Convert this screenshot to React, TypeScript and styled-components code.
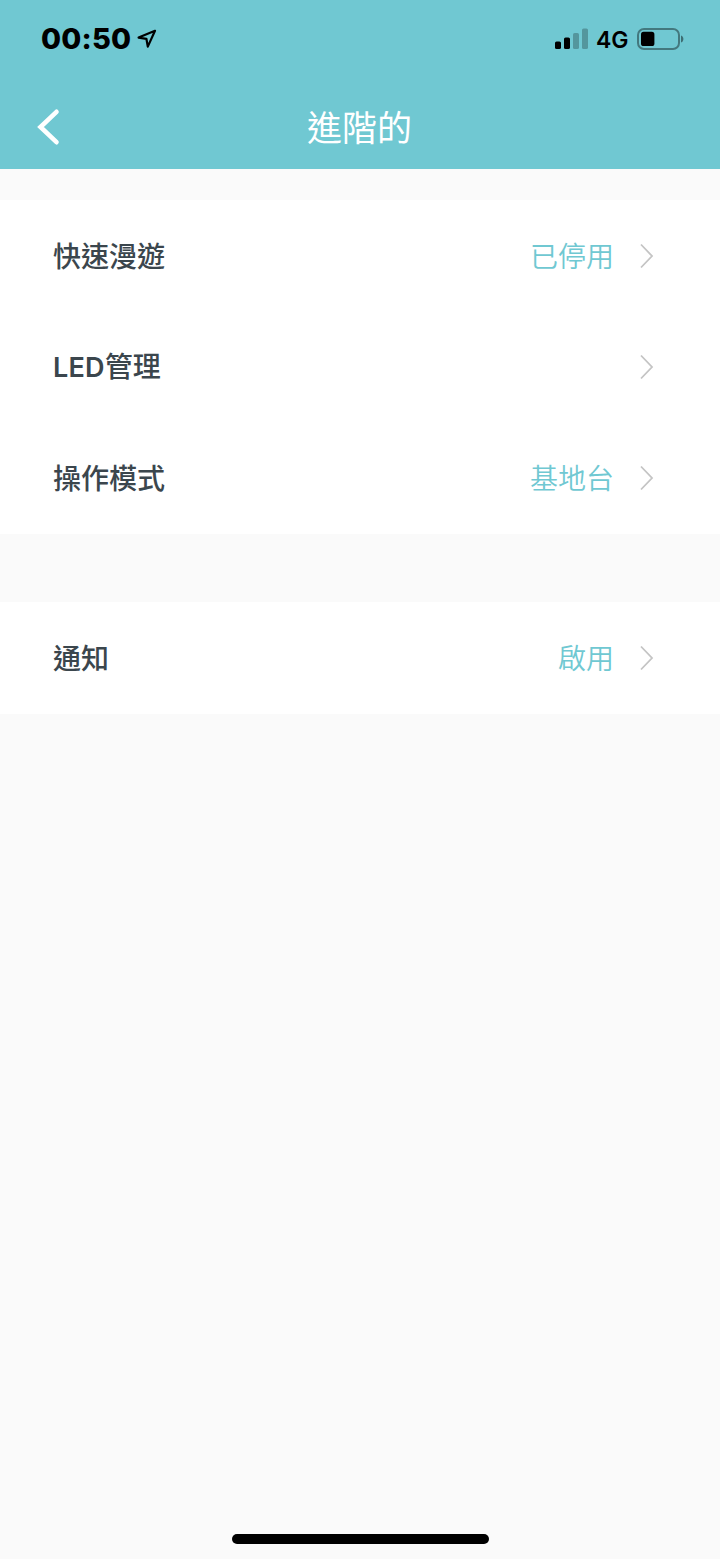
import styled, { createGlobalStyle } from 'styled-components'

const GlobalStyle = createGlobalStyle`
  * {
    box-sizing: border-box;
  }

  body {
    margin: 0;
    background-color: #fafafa;
    font-family: "Noto Sans CJK TC", sans-serif;
  }
`

const Screen = styled.div`
  display: flex;
  flex-direction: column;
  width: 100%;
  height: 1559px;
  background-color: #fafafa;
`

const Header = styled.header`
  height: 169px;
  background-color: #70c8d2;
`

const StatusBar = styled.div`
  display: flex;
  align-items: center;
  justify-content: space-between;
  height: 86px;
  padding: 0 36px 8px 41px;
  color: #000;
  font-family: Inter, sans-serif;
`

const StatusGroup = styled.div`
  display: flex;
  align-items: center;
`

const Time = styled.span`
  width: 89px;
  margin-right: 7px;
  font-size: 29px;
  font-weight: 800;
  letter-spacing: 0.2px;
  line-height: 34px;
  white-space: nowrap;
`

const Network = styled.span`
  width: 33px;
  margin: 1px 8px 0 8px;
  font-size: 23px;
  font-weight: 600;
  line-height: 28px;
  white-space: nowrap;
`

const NavBar = styled.div`
  display: grid;
  grid-template-columns: 100px 1fr 100px;
  align-items: center;
  height: 83px;
`

const BackButton = styled.button`
  display: flex;
  align-items: center;
  height: 83px;
  padding: 0 0 2px 36px;
  border: none;
  background: none;
`

const Title = styled.h1`
  margin: 0 1px 4px 0;
  color: #fff;
  font-size: 35px;
  font-weight: 400;
  line-height: 50px;
  text-align: center;
`

const Section = styled.section<{ $top: number }>`
  display: flex;
  flex-direction: column;
  margin-top: ${({ $top }) => $top}px;
  background-color: #fff;
`

const Row = styled.div`
  display: flex;
  align-items: center;
  height: 111.4px;
  padding: 0 66px 0 53px;
`

const Label = styled.span`
  flex: 1;
  margin-bottom: 2.1px;
  color: #3b464d;
  font-size: 28px;
  font-weight: 500;
  line-height: 40px;
`

const Latin = styled.span`
  font-family: Inter, sans-serif;
  font-size: 27px;
  font-weight: 600;
  letter-spacing: 0.2px;
`

const Value = styled.span`
  margin: 0 26px 2.1px 0;
  color: #70c8d2;
  font-size: 28px;
  font-weight: 350;
  line-height: 40px;
`

const HomeIndicator = styled.div`
  width: 257px;
  height: 10px;
  margin: auto 231px 15px 232px;
  border-radius: 5px;
  background-color: #000;
`

const LocationIcon = () => (
  <svg width="20" height="20" viewBox="0 0 20 20" fill="none">
    <path d="M18 1.8L1.6 8.6L9.4 9.8L10.8 17.6Z" stroke="#000" strokeWidth="2.2" strokeLinejoin="round" />
  </svg>
)

const SignalIcon = () => (
  <svg width="33" height="22" viewBox="0 0 33 22">
    <rect x="0" y="13.5" width="6" height="7.5" rx="1.6" />
    <rect x="9" y="9.5" width="6" height="11.5" rx="1.6" />
    <rect x="18" y="5" width="6" height="16" rx="1.6" opacity="0.25" />
    <rect x="27" y="0.5" width="6" height="20.5" rx="1.6" opacity="0.25" />
  </svg>
)

const BatteryIcon = () => (
  <svg width="47" height="22" viewBox="0 0 47 22">
    <rect x="1" y="1" width="41" height="20" rx="6" fill="none" stroke="#000" strokeOpacity="0.4" strokeWidth="2" />
    <rect x="4" y="3.8" width="13.4" height="14.2" rx="2.6" />
    <path d="M44 7.4C47.2 8.6 47.2 13.4 44 14.6Z" opacity="0.45" />
  </svg>
)

const BackIcon = () => (
  <svg width="24" height="38" viewBox="0 0 24 38" fill="none">
    <path d="M20.5 3.8L4.5 19L20.5 34.2" stroke="#fff" strokeWidth="4.6" strokeLinecap="round" />
  </svg>
)

const ChevronIcon = () => (
  <svg width="14" height="26" viewBox="0 0 14 26" fill="none">
    <path d="M1 1.5L12 13L1 24.5" stroke="#c4c4c4" strokeWidth="1.8" />
  </svg>
)

type ItemProps = {
  label: string
  latin?: string
  value?: string
}

const Item = ({ label, latin, value }: ItemProps) => (
  <Row>
    <Label>
      {latin && <Latin>{latin}</Latin>}
      {label}
    </Label>
    {value && <Value>{value}</Value>}
    <ChevronIcon />
  </Row>
)

const App = () => {
  return (
    <Screen>
      <GlobalStyle />
      <Header>
        <StatusBar>
          <StatusGroup>
            <Time>00:50</Time>
            <LocationIcon />
          </StatusGroup>
          <StatusGroup>
            <SignalIcon />
            <Network>4G</Network>
            <BatteryIcon />
          </StatusGroup>
        </StatusBar>
        <NavBar>
          <BackButton>
            <BackIcon />
          </BackButton>
          <Title>進階的</Title>
        </NavBar>
      </Header>
      <Section $top={31}>
        <Item label="快速漫遊" value="已停用" />
        <Item latin="LED" label="管理" />
        <Item label="操作模式" value="基地台" />
      </Section>
      <Section $top={68}>
        <Item label="通知" value="啟用" />
      </Section>
      <HomeIndicator />
    </Screen>
  )
}

export default App
